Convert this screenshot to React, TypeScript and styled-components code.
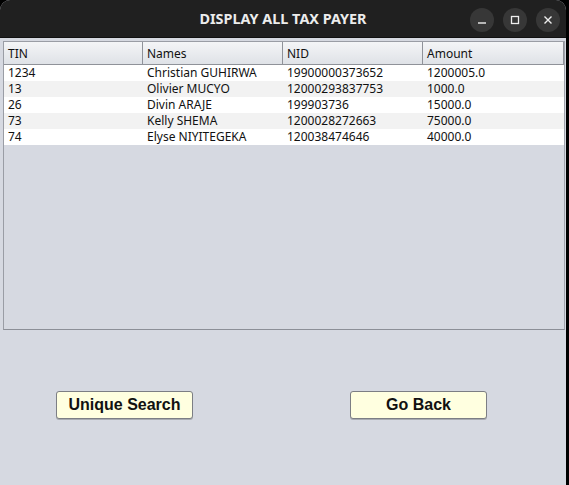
import React from "react";
import styled, { createGlobalStyle } from "styled-components";

const Global = createGlobalStyle`
  html, body { margin: 0; padding: 0; background: #000; }
  body { width: 569px; height: 485px; overflow: hidden; }
`;

const Window = styled.div`
  width: 566px;
  height: 485px;
  display: flex;
  flex-direction: column;
  background: #d6d9e1;
  border-radius: 10px 10px 0 0;
  overflow: hidden;
`;

const TitleBar = styled.div`
  height: 38px;
  flex: none;
  background: #202020;
  display: flex;
  align-items: center;
  justify-content: center;
  position: relative;
  border-bottom: 1px solid #111;
  box-sizing: border-box;
`;

const Title = styled.div`
  color: #ececec;
  font-family: "Noto Sans", sans-serif;
  font-weight: 700;
  font-size: 14.4px;
`;

const Controls = styled.div`
  position: absolute;
  right: 6px;
  top: 8px;
  display: flex;
  gap: 9px;
`;

const CircleBtn = styled.div`
  width: 24px;
  height: 24px;
  border-radius: 50%;
  background: #373737;
  display: flex;
  align-items: center;
  justify-content: center;
`;

const Body = styled.div`
  flex: 1;
  display: flex;
  flex-direction: column;
  padding: 3px 1px 0 3px;
`;

const ScrollPane = styled.div`
  height: 289px;
  box-sizing: border-box;
  border: 1px solid #9a9da5;
  border-bottom-color: #8c8f97;
  border-right-color: #a0a3ab;
  background: #d6d9e1;
  display: flex;
  flex-direction: column;
`;

const Grid = styled.div`
  display: grid;
  grid-template-columns: 139px 140px 140px 141px;
  font-family: "Noto Sans", sans-serif;
  font-size: 12px;
  color: #111;
`;

const HeadCell = styled.div`
  height: 23px;
  box-sizing: border-box;
  padding: 0 4px;
  display: flex;
  align-items: center;
  background: linear-gradient(#f4f5f7, #dfe2e7);
  border-right: 1px solid #8f9299;
  border-bottom: 1px solid #8f9299;
  &:last-child { border-right: 1px solid #b9bcc2; }
`;

const Cell = styled.div<{ $alt: boolean }>`
  height: 16px;
  line-height: 16px;
  padding: 0 4px;
  white-space: nowrap;
  background: ${(p) => (p.$alt ? "#f2f2f2" : "#ffffff")};
`;

const ButtonRow = styled.div`
  display: flex;
  justify-content: space-between;
  padding: 61px 78px 0 53px;
`;

const Btn = styled.button`
  width: 137px;
  height: 28px;
  box-sizing: border-box;
  background: #ffffe0;
  border: 1px solid #7c7e84;
  border-radius: 3px;
  box-shadow: 0 1px 0 #a8abb2;
  font-family: "Liberation Sans", Arial, sans-serif;
  font-weight: 700;
  font-size: 16px;
  color: #111;
  padding: 0;
`;

const rows = [
  ["1234", "Christian GUHIRWA", "19900000373652", "1200005.0"],
  ["13", "Olivier MUCYO", "12000293837753", "1000.0"],
  ["26", "Divin ARAJE", "199903736", "15000.0"],
  ["73", "Kelly SHEMA", "1200028272663", "75000.0"],
  ["74", "Elyse NIYITEGEKA", "120038474646", "40000.0"],
];

export default function App() {
  return (
    <>
      <Global />
      <Window>
        <TitleBar>
          <Title>DISPLAY ALL TAX PAYER</Title>
          <Controls>
            <CircleBtn>
              <svg width="10" height="10" viewBox="0 0 10 10">
                <line x1="1" y1="8" x2="9" y2="8" stroke="#eee" strokeWidth="1.4" />
              </svg>
            </CircleBtn>
            <CircleBtn>
              <svg width="10" height="10" viewBox="0 0 10 10">
                <rect x="1.5" y="1.5" width="7" height="7" fill="none" stroke="#eee" strokeWidth="1.3" />
              </svg>
            </CircleBtn>
            <CircleBtn>
              <svg width="10" height="10" viewBox="0 0 10 10">
                <path d="M1.5 1.5 L8.5 8.5 M8.5 1.5 L1.5 8.5" stroke="#eee" strokeWidth="1.4" />
              </svg>
            </CircleBtn>
          </Controls>
        </TitleBar>
        <Body>
          <ScrollPane>
            <Grid>
              {["TIN", "Names", "NID", "Amount"].map((h) => (
                <HeadCell key={h}>{h}</HeadCell>
              ))}
              {rows.map((r, i) =>
                r.map((c, j) => (
                  <Cell key={i + "-" + j} $alt={i % 2 === 1}>
                    {c}
                  </Cell>
                ))
              )}
            </Grid>
          </ScrollPane>
          <ButtonRow>
            <Btn>Unique Search</Btn>
            <Btn>Go Back</Btn>
          </ButtonRow>
        </Body>
      </Window>
    </>
  );
}
